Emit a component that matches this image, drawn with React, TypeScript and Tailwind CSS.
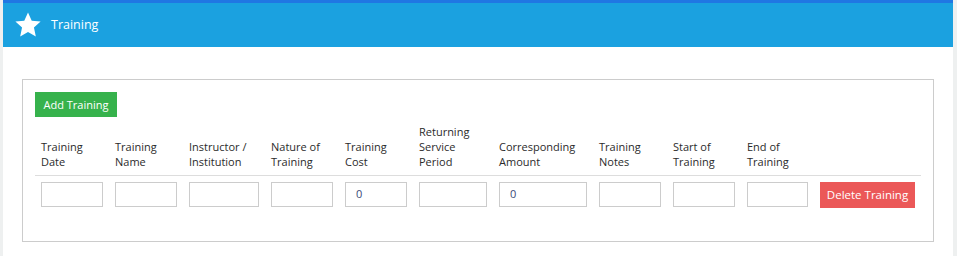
import React from "react";

const cols = [
  { label: ["Training", "Date"], w: 62, val: "" },
  { label: ["Training", "Name"], w: 62, val: "" },
  { label: ["Instructor /", "Institution"], w: 70, val: "" },
  { label: ["Nature of", "Training"], w: 62, val: "" },
  { label: ["Training", "Cost"], w: 62, val: "0" },
  { label: ["Returning", "Service", "Period"], w: 68, val: "" },
  { label: ["Corresponding", "Amount"], w: 88, val: "0" },
  { label: ["Training", "Notes"], w: 62, val: "" },
  { label: ["Start of", "Training"], w: 62, val: "" },
  { label: ["End of", "Training"], w: 61, val: "" },
];

export default function App() {
  return (
    <div
      className="w-[957px] h-[256px] bg-[#eef0f0] flex pl-[3px] pr-[4px] overflow-hidden"
      style={{ fontFamily: '"Open Sans", "Noto Sans", sans-serif' }}
    >
      <div className="w-[950px] flex flex-col bg-white">
        <div className="h-[3px] bg-[#2077e3]" />
        <div className="h-[44px] bg-[#1ba1e0] flex items-center pl-[10px]">
          <svg width="30" height="28" viewBox="0 0 24 24" className="mr-[8px]">
            <path
              fill="#fff"
              d="M12 1.2l3.2 7.1 7.6.8-5.7 5.1 1.6 7.6L12 17.9l-6.7 3.9 1.6-7.6-5.7-5.1 7.6-.8z"
            />
          </svg>
          <span className="text-white text-[12.5px] leading-none">Training</span>
        </div>
        <div className="pl-[19px] pr-[19px] pt-[32px]">
          <div className="border border-[#cccccc] px-[12px] pt-[12px] pb-[33px]">
            <button className="block bg-[#36b24c] text-white text-[11px] h-[25px] w-[82px] leading-none">
              Add Training
            </button>
            <div className="mt-[7px] flex items-end border-b border-[#dddddd] pb-[6px]">
              {cols.map((c, i) => (
                <div
                  key={i}
                  className="px-[6px] text-[11px] leading-[15px] text-[#2b2b2b]"
                  style={{ width: c.w + 12 }}
                >
                  {c.label.map((l, j) => (
                    <div key={j} className="whitespace-nowrap">
                      {l}
                    </div>
                  ))}
                </div>
              ))}
              <div className="w-[107px]" />
            </div>
            <div className="flex items-start pt-[6px]">
              {cols.map((c, i) => (
                <div key={i} className="px-[6px]" style={{ width: c.w + 12 }}>
                  <div className="h-[25px] border border-[#cccccc] flex items-center pl-[10px] text-[11px] text-[#3a4a78]">
                    {c.val}
                  </div>
                </div>
              ))}
              <div className="w-[107px] px-[6px]">
                <button className="block w-[95px] h-[26px] bg-[#eb5858] text-white text-[11.5px] leading-none">
                  Delete Training
                </button>
              </div>
            </div>
          </div>
        </div>
      </div>
    </div>
  );
}
